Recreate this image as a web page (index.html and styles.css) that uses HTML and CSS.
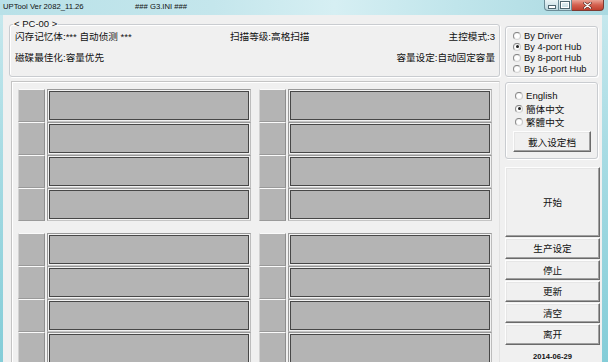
FILE: index.html
```html
<!DOCTYPE html>
<html>
<head>
<meta charset="utf-8">
<link rel="stylesheet" href="styles.css">
</head>
<body>
<div class="titlebar">
  <span class="t-app">UPTool Ver 2082_11.26</span>
  <span class="t-ini">### G3.INI ###</span>
  <div class="wctl">
    <span class="wb min"><span class="g-min"></span></span>
    <span class="wb max"><span class="g-max"></span></span>
    <span class="wb close"><svg width="9" height="7" viewBox="0 0 9 7"><path d="M1.5 1L7.5 6M7.5 1L1.5 6" stroke="#5a2a24" stroke-width="2.6" stroke-linecap="round"/><path d="M1.5 1L7.5 6M7.5 1L1.5 6" stroke="#fff" stroke-width="1.4" stroke-linecap="round"/></svg></span>
  </div>
</div>
<div class="client">
  <div class="leftcol">
    <fieldset class="info">
      <legend>&lt; PC-00 &gt;</legend>
      <div class="inforow first"><span>闪存记忆体:*** 自动侦测 ***</span><span>扫描等级:高格扫描</span><span class="r">主控模式:3</span></div>
      <div class="inforow second"><span>磁碟最佳化:容量优先</span><span></span><span class="r">容量设定:自动固定容量</span></div>
    </fieldset>
    <div class="panel">
      <div class="block">
        <div class="col">
          <div class="row"><div class="sq"></div><div class="bar"></div></div>
          <div class="row"><div class="sq"></div><div class="bar"></div></div>
          <div class="row"><div class="sq"></div><div class="bar"></div></div>
          <div class="row"><div class="sq"></div><div class="bar"></div></div>
        </div>
        <div class="col">
          <div class="row"><div class="sq"></div><div class="bar"></div></div>
          <div class="row"><div class="sq"></div><div class="bar"></div></div>
          <div class="row"><div class="sq"></div><div class="bar"></div></div>
          <div class="row"><div class="sq"></div><div class="bar"></div></div>
        </div>
      </div>
      <div class="block">
        <div class="col">
          <div class="row"><div class="sq"></div><div class="bar"></div></div>
          <div class="row"><div class="sq"></div><div class="bar"></div></div>
          <div class="row"><div class="sq"></div><div class="bar"></div></div>
          <div class="row"><div class="sq"></div><div class="bar"></div></div>
        </div>
        <div class="col">
          <div class="row"><div class="sq"></div><div class="bar"></div></div>
          <div class="row"><div class="sq"></div><div class="bar"></div></div>
          <div class="row"><div class="sq"></div><div class="bar"></div></div>
          <div class="row"><div class="sq"></div><div class="bar"></div></div>
        </div>
      </div>
    </div>
  </div>
  <div class="rightcol">
    <div class="rbox hub">
      <div class="radio"><span class="dot"></span><span>By Driver</span></div>
      <div class="radio"><span class="dot on"></span><span>By 4-port Hub</span></div>
      <div class="radio"><span class="dot"></span><span>By 8-port Hub</span></div>
      <div class="radio"><span class="dot"></span><span>By 16-port Hub</span></div>
    </div>
    <div class="rbox lang">
      <div class="radio cjk"><span class="dot"></span><span>English</span></div>
      <div class="radio cjk"><span class="dot on"></span><span>簡体中文</span></div>
      <div class="radio cjk"><span class="dot"></span><span>繁體中文</span></div>
      <button class="btn load">載入设定档</button>
    </div>
    <button class="btn start">开始</button>
    <button class="btn small">生产设定</button>
    <button class="btn small">停止</button>
    <button class="btn small">更新</button>
    <button class="btn small">清空</button>
    <button class="btn small">离开</button>
    <div class="date">2014-06-29</div>
  </div>
</div>
</body>
</html>
```
FILE: styles.css
```css
html, body {
  margin: 0;
  padding: 0;
}
body {
  width: 608px;
  height: 362px;
  overflow: hidden;
  font-family: "Liberation Sans", "Noto Sans CJK SC", sans-serif;
  color: #111;
  background: linear-gradient(180deg, #c9e9ee 0%, #a9dce4 40%, #84cdd8 100%);
}
.titlebar {
  height: 15px;
  display: flex;
  align-items: flex-start;
  padding-left: 3px;
  font-size: 7.7px;
  line-height: 14px;
  background: linear-gradient(90deg, #b9e1e8 0%, #c4e6ec 35%, #d6eff3 55%, #c0e5eb 75%, #aad9e1 100%);
}
.t-app {
  width: 132px;
}
.wctl {
  margin-left: auto;
  margin-right: 4px;
  display: flex;
  height: 11px;
}
.wb {
  height: 11px;
  box-sizing: border-box;
  border: 1px solid #6b8c97;
  border-top: none;
  display: flex;
  align-items: center;
  justify-content: center;
  background: linear-gradient(180deg, #eaf4f6 0%, #d3e5ea 50%, #bcd6dd 100%);
}
.min {
  width: 15px;
  border-radius: 0 0 0 4px;
}
.max {
  width: 13px;
  border-left: none;
}
.close {
  width: 32px;
  border-left: none;
  border-color: #7c3a32;
  border-radius: 0 0 4px 0;
  background: linear-gradient(180deg, #eaa395 0%, #d4604f 50%, #c0402f 100%);
}
.g-min {
  width: 6px;
  height: 2px;
  margin-top: 3px;
  background: #fff;
  border: 1px solid #4e6670;
}
.g-max {
  width: 6px;
  height: 4px;
  border: 1px solid #fff;
  outline: 1px solid #4e6670;
}
.client {
  margin-left: 3px;
  width: 599px;
  height: 347px;
  background: #f0f0f0;
  display: flex;
}
.leftcol {
  width: 497px;
  padding-left: 6px;
  box-sizing: border-box;
  display: flex;
  flex-direction: column;
}
.info {
  margin: 4px 0 0 0;
  padding: 0 4px 12px 5px;
  border: 1px solid #c9ccd0;
  border-radius: 3px;
  box-shadow: inset 1px 1px 0 #fff, 1px 1px 0 #fff;
  min-width: 0;
}
.info legend {
  padding: 0 1px;
  margin-left: -2px;
  font-size: 9.5px;
  line-height: 10px;
}
.inforow {
  display: grid;
  grid-template-columns: 215px 1fr auto;
  height: 12px;
  line-height: 12px;
  font-size: 9.6px;
  white-space: nowrap;
}
.inforow.first {
  margin-top: 2px;
}
.inforow.second {
  margin-top: 9px;
}
.panel {
  margin: 4px 0 0 2px;
  padding: 7px 7px 0 6px;
  border: 1px solid #c4c4c4;
  border-right-color: #e2e2e2;
  box-shadow: inset 1px 1px 0 #fff;
  flex: 1;
}
.block {
  display: grid;
  grid-template-columns: 233px 233px;
  column-gap: 8px;
}
.block + .block {
  margin-top: 12px;
}
.col {
  display: flex;
  flex-direction: column;
}
.row {
  display: flex;
  gap: 2px;
  height: 33px;
}
.sq {
  width: 27px;
  box-sizing: border-box;
  background: #b4b4b4;
  border: 1px solid;
  border-color: #fafafa #8e8e8e #9a9a9a #d2d2d2;
}
.bar {
  width: 204px;
  box-sizing: border-box;
  background: #b4b4b4;
  border: 1px solid;
  border-color: #999 #bcbcbc #c4c4c4 #999;
  box-shadow: inset 0 0 0 1px #f2f2f2, inset 0 0 0 2px #474747;
}
.rightcol {
  width: 102px;
  padding-left: 5px;
  box-sizing: border-box;
  display: flex;
  flex-direction: column;
}
.rbox {
  width: 93px;
  box-sizing: border-box;
  border: 1px solid #c9ccd0;
  border-radius: 3px;
  box-shadow: inset 1px 1px 0 #fff, 1px 1px 0 #fff;
}
.hub {
  margin-top: 11px;
  height: 51px;
  padding: 3px 0 0 7px;
}
.radio {
  display: flex;
  align-items: center;
  gap: 3px;
  height: 11px;
  font-size: 9.3px;
  white-space: nowrap;
}
.dot {
  width: 8px;
  height: 8px;
  flex: none;
  box-sizing: border-box;
  border-radius: 50%;
  border: 1px solid;
  border-color: #808080 #c8c8c8 #d8d8d8 #8a8a8a;
  background: radial-gradient(circle, #ffffff 40%, #e4e4e4 100%);
  display: flex;
  align-items: center;
  justify-content: center;
}
.dot.on::after {
  content: "";
  width: 3px;
  height: 3px;
  border-radius: 50%;
  background: #1e1e1e;
}
.lang {
  margin-top: 5px;
  height: 77px;
  padding: 6px 0 0 7px;
}
.radio.cjk {
  height: 13px;
  padding-left: 2px;
  font-size: 9.6px;
}
.btn {
  box-sizing: border-box;
  margin: 0;
  padding: 0;
  background: #f0f0f0;
  border: 1px solid;
  border-color: #fdfdfd #6a6a6a #6a6a6a #fdfdfd;
  box-shadow: inset -1px -1px 0 #a0a0a0, inset 1px 1px 0 #e6e6e6;
  font-family: "Liberation Sans", "Noto Sans CJK SC", sans-serif;
  font-size: 9.6px;
  color: #111;
  display: flex;
  align-items: center;
  justify-content: center;
}
.load {
  width: 78px;
  height: 21px;
  margin-top: 3px;
}
.start {
  width: 95px;
  height: 70px;
  margin-top: 8px;
}
.small {
  width: 95px;
  height: 20.5px;
  margin-top: 1px;
}
.date {
  width: 95px;
  margin-top: 7px;
  text-align: center;
  font-size: 7.6px;
  font-weight: bold;
  line-height: 10px;
}
```
